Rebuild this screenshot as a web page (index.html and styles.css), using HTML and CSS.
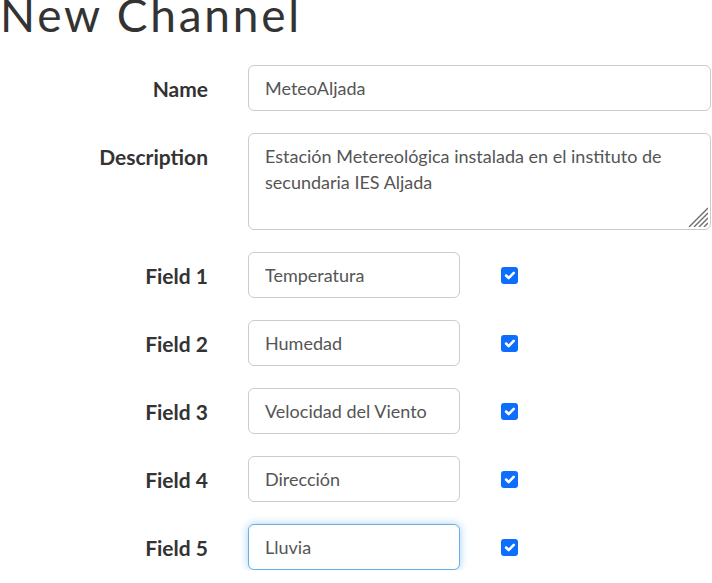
FILE: index.html
```html
<!DOCTYPE html>
<html lang="es">
<head>
<meta charset="utf-8">
<title>New Channel</title>
<link rel="stylesheet" href="styles.css">
</head>
<body>
<h1 class="title">New Channel</h1>
<form class="form">
  <label class="label" for="name">Name</label>
  <div class="control"><input class="input" id="name" type="text" value="MeteoAljada"></div>

  <label class="label" for="desc">Description</label>
  <div class="control area-wrap"><textarea class="input textarea" id="desc">Estación Metereológica instalada en el instituto de
secundaria IES Aljada</textarea><svg class="grip" viewBox="0 0 20 20" width="20" height="20"><path d="M1 20L20 1M6 20L20 6M11 20L20 11M16 20L20 16" fill="none" stroke="#6b6b6b" stroke-width="1.4"/></svg></div>

  <label class="label" for="f1">Field 1</label>
  <div class="control field"><input class="input short" id="f1" type="text" value="Temperatura"><span class="check"><svg viewBox="0 0 20 20" width="17" height="17"><path d="M6 10l3 3 6-6" fill="none" stroke="#fff" stroke-width="3" stroke-linecap="round" stroke-linejoin="round"/></svg></span></div>

  <label class="label" for="f2">Field 2</label>
  <div class="control field"><input class="input short" id="f2" type="text" value="Humedad"><span class="check"><svg viewBox="0 0 20 20" width="17" height="17"><path d="M6 10l3 3 6-6" fill="none" stroke="#fff" stroke-width="3" stroke-linecap="round" stroke-linejoin="round"/></svg></span></div>

  <label class="label" for="f3">Field 3</label>
  <div class="control field"><input class="input short" id="f3" type="text" value="Velocidad del Viento"><span class="check"><svg viewBox="0 0 20 20" width="17" height="17"><path d="M6 10l3 3 6-6" fill="none" stroke="#fff" stroke-width="3" stroke-linecap="round" stroke-linejoin="round"/></svg></span></div>

  <label class="label" for="f4">Field 4</label>
  <div class="control field"><input class="input short" id="f4" type="text" value="Dirección"><span class="check"><svg viewBox="0 0 20 20" width="17" height="17"><path d="M6 10l3 3 6-6" fill="none" stroke="#fff" stroke-width="3" stroke-linecap="round" stroke-linejoin="round"/></svg></span></div>

  <label class="label" for="f5">Field 5</label>
  <div class="control field"><input class="input short focused" id="f5" type="text" value="Lluvia"><span class="check"><svg viewBox="0 0 20 20" width="17" height="17"><path d="M6 10l3 3 6-6" fill="none" stroke="#fff" stroke-width="3" stroke-linecap="round" stroke-linejoin="round"/></svg></span></div>
</form>
</body>
</html>
```
FILE: styles.css
```css
html, body {
  margin: 0;
  padding: 0;
  background: #fff;
}

body {
  font-family: "Lato", "Liberation Sans", sans-serif;
  color: #333;
  overflow: hidden;
}

.title {
  margin: 0;
  font-family: "Lato", sans-serif;
  font-weight: 400;
  font-size: 46px;
  line-height: 30px;
  letter-spacing: 2.8px;
  color: #333;
}

.form {
  display: grid;
  grid-template-columns: 208px 1fr;
  column-gap: 40px;
  row-gap: 22px;
  margin: 35px 1px 0 0;
}

.label {
  text-align: right;
  font-weight: 700;
  font-size: 21px;
  line-height: 24px;
  padding-top: 12px;
  color: #333;
}

.control {
  display: flex;
  align-items: center;
}

.area-wrap {
  position: relative;
}

.input {
  box-sizing: border-box;
  width: 100%;
  height: 46px;
  margin: 0;
  padding: 9px 16px;
  border: 1px solid #ccc;
  border-radius: 6px;
  background: #fff;
  font-family: "Lato", sans-serif;
  font-size: 18px;
  line-height: 26px;
  color: #555;
  outline: none;
}

.textarea {
  height: 97px;
  resize: none;
  display: block;
  overflow: hidden;
}

.grip {
  position: absolute;
  right: 3px;
  bottom: 3px;
  display: block;
}

.short {
  width: 212px;
  flex: none;
}

.focused {
  border-color: #66afe9;
  box-shadow: 0 0 8px rgba(102, 175, 233, 0.6);
}

.check {
  display: flex;
  align-items: center;
  justify-content: center;
  width: 17px;
  height: 17px;
  margin-left: 41px;
  margin-top: 1px;
  background: #0d6efd;
  border-radius: 3px;
}

.check svg {
  display: block;
}
```
